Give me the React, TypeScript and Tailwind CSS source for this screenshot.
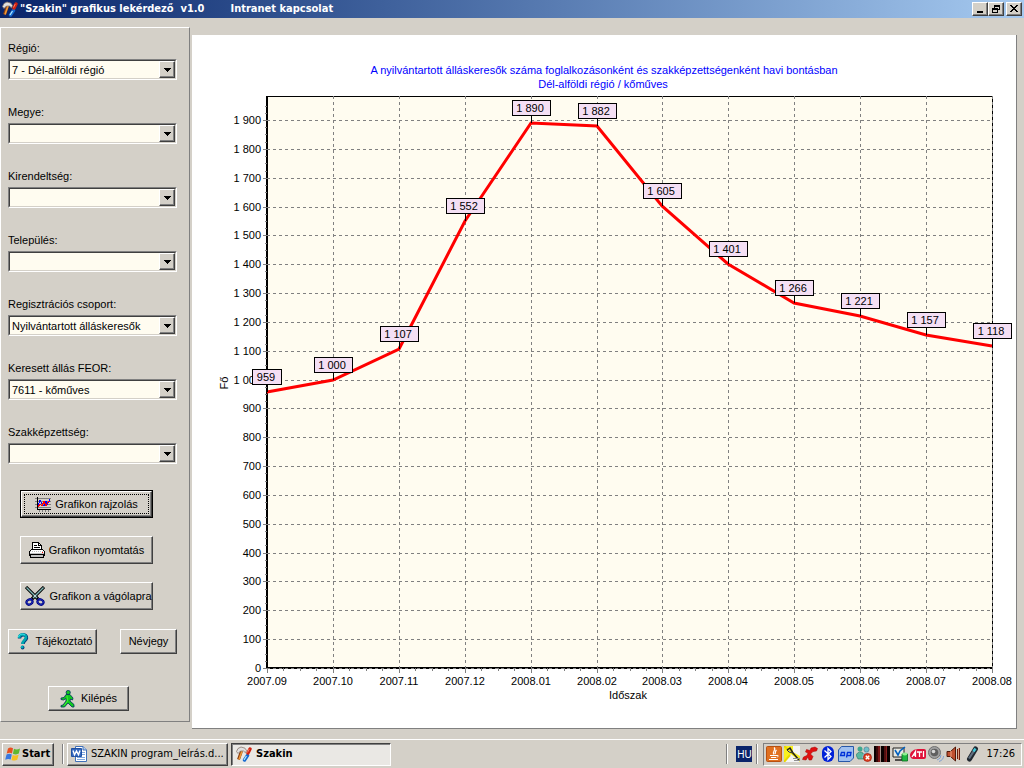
import React from "react";

const UI = "font-['Liberation_Sans',Arial,sans-serif]";
const TAHOMA = "font-['DejaVu_Sans_Condensed','DejaVu_Sans',sans-serif]";
const RAISED =
  "border border-t-white border-l-white border-r-[#404040] border-b-[#404040] shadow-[inset_-1px_-1px_0_#808080] bg-[#d4d0c8]";

const points = [
  { month: "2007.09", value: 959 },
  { month: "2007.10", value: 1000 },
  { month: "2007.11", value: 1107 },
  { month: "2007.12", value: 1552 },
  { month: "2008.01", value: 1890 },
  { month: "2008.02", value: 1882 },
  { month: "2008.03", value: 1605 },
  { month: "2008.04", value: 1401 },
  { month: "2008.05", value: 1266 },
  { month: "2008.06", value: 1221 },
  { month: "2008.07", value: 1157 },
  { month: "2008.08", value: 1118 },
];

const fields = [
  { id: "regio", label: "Régió:", value: "7 - Dél-alföldi régió" },
  { id: "megye", label: "Megye:", value: "" },
  { id: "kirendeltseg", label: "Kirendeltség:", value: "" },
  { id: "telepules", label: "Település:", value: "" },
  { id: "csoport", label: "Regisztrációs csoport:", value: "Nyilvántartott álláskeresők" },
  { id: "feor", label: "Keresett állás FEOR:", value: "7611 - kőműves" },
  { id: "szak", label: "Szakképzettség:", value: "" },
];

function format(n: number) {
  return n >= 1000 ? `${Math.floor(n / 1000)} ${String(n % 1000).padStart(3, "0")}` : String(n);
}

function ToolsIcon() {
  return (
    <svg width="16" height="16" viewBox="0 0 16 16" aria-hidden="true" className="shrink-0">
      <path d="M5.5 5 L2.5 13.5" stroke="#8a4010" strokeWidth="3" />
      <path d="M6 5 L3 13.5" stroke="#f09838" strokeWidth="1.6" />
      <path d="M0.5 5.5 L2 2.5 L5 1 L9 2.2 L10.5 4.5 L9.5 6.8 L7.5 5 L4.5 5 L2 7.5 Z" fill="#e0e0e0" stroke="#8a7870" strokeWidth="0.8" />
      <path d="M8.5 14 L11.5 9.5" stroke="#1468d0" strokeWidth="3.4" strokeLinecap="round" />
      <path d="M8 14 L10.5 10" stroke="#b0e8ff" strokeWidth="1.3" />
      <path d="M12 7 L14 3" stroke="#d02010" strokeWidth="3.4" strokeLinecap="round" />
      <path d="M11.5 6.5 L13.2 3" stroke="#ff8060" strokeWidth="1" />
    </svg>
  );
}

function ChartIcon() {
  return (
    <svg width="16" height="15" viewBox="0 0 16 15" aria-hidden="true" className="shrink-0" shapeRendering="crispEdges">
      <path d="M0 1.5H16 M0 4.5H16 M0 7.5H16 M0 10.5H16 M4.5 12V15 M7.5 12V15 M10.5 12V15 M13.5 12V15" stroke="#808080" fill="none" />
      <path d="M2.5 0V12.5H16" stroke="#000" fill="none" />
      <path d="M3 9 L5 3 L7 7 L9 9 L11 4 L12 8 L15 2" stroke="#0000ff" strokeWidth="1.2" fill="none" />
      <path d="M3 10 L5 7 L7 9 L9 4 L11 9 L13 5 L15 4" stroke="#ff0000" strokeWidth="1.2" fill="none" />
    </svg>
  );
}

function PrinterIcon() {
  return (
    <svg width="16" height="16" viewBox="0 0 16 16" aria-hidden="true" className="shrink-0" shapeRendering="crispEdges">
      <path d="M3.5 8.5V0.5H9.5L12.5 3.5V8.5Z" fill="#fff" stroke="#000" />
      <path d="M9.5 0.5V3.5H12.5 M5 3.5H8 M5 5.5H11" fill="none" stroke="#000" />
      <path d="M2.5 7.5H13.5L15.5 9.5V13.5H0.5V9.5Z" fill="#fff" stroke="#000" />
      <path d="M1 9.5H15" stroke="#c0c0c0" strokeDasharray="1 1" />
      <path d="M1 11.5H15" stroke="#c0c0c0" />
      <path d="M13 10H14V11H13Z" fill="#f00" />
      <path d="M1.5 12.5H14.5V15.5H1.5Z" fill="#c0c0c0" stroke="#000" />
    </svg>
  );
}

function ScissorsIcon() {
  return (
    <svg width="20" height="20" viewBox="0 0 20 20" aria-hidden="true" className="shrink-0">
      <path d="M1 1 L13 13 M19 1 L7 13" stroke="#000" strokeWidth="3.2" />
      <path d="M1.5 1.5 L12 12 M18.5 1.5 L8 12" stroke="#80b8b8" strokeWidth="1.4" />
      <circle cx="10" cy="10" r="0.8" fill="#fff" />
      <ellipse cx="4.5" cy="16" rx="3.1" ry="2.5" transform="rotate(-25 4.5 16)" fill="none" stroke="#000080" strokeWidth="2.2" />
      <ellipse cx="15.5" cy="16" rx="3.1" ry="2.5" transform="rotate(25 15.5 16)" fill="none" stroke="#000080" strokeWidth="2.2" />
      <ellipse cx="4.5" cy="16" rx="3" ry="2.4" transform="rotate(-25 4.5 16)" fill="none" stroke="#2848d8" strokeWidth="0.6" />
      <ellipse cx="15.5" cy="16" rx="3" ry="2.4" transform="rotate(25 15.5 16)" fill="none" stroke="#2848d8" strokeWidth="0.6" />
    </svg>
  );
}

function HelpIcon() {
  return (
    <svg width="12" height="17" viewBox="0 0 12 17" aria-hidden="true" className="shrink-0">
      <path d="M2.5 5.5 C2.5 0.8 10 0.8 9.5 5 C9.2 7.5 6 8 6 11" fill="none" stroke="#004080" strokeWidth="3.4" />
      <path d="M2 5 C2 0.5 9.4 0.5 9 4.5 C8.7 7 5.5 7.5 5.5 11" fill="none" stroke="#00a8b0" strokeWidth="2.6" />
      <path d="M1.5 4 C2.5 0.8 6 0.6 8 2" fill="none" stroke="#40e8f0" strokeWidth="1" />
      <circle cx="5.6" cy="14.5" r="1.9" fill="#004080" />
      <circle cx="5.2" cy="14.1" r="1.4" fill="#00b0b8" />
    </svg>
  );
}

function ExitIcon() {
  return (
    <svg width="15" height="18" viewBox="0 0 15 18" aria-hidden="true" className="shrink-0">
      <g stroke="#003060" strokeWidth="0.8">
        <path d="M6 4.5 L10 4.5 L13 8 L12.5 10 L10.5 9 L10 11 L14 14.5 L14 17 L12 17 L8 13 L4.5 17 L1 17 L1 15.5 L3 15 L6 11 L6 8.5 L3.5 10 L1 9.5 L1 8 L4 7.5 Z" fill="#10c820" />
        <circle cx="8.2" cy="2.5" r="2.1" fill="#10c820" />
      </g>
      <path d="M7 5.5 L7.5 11 L4 15.5" stroke="#40f030" strokeWidth="1" fill="none" />
    </svg>
  );
}

function WindowsIcon() {
  return (
    <svg width="16" height="16" viewBox="0 0 16 16" aria-hidden="true" className="shrink-0">
      <path d="M3 2.5 C5 1 6.5 1.5 8 2.3 L7 7.5 C5.5 6.6 4 6.5 1.7 7.6 Z" fill="#e85020" />
      <path d="M9 2.8 C11 3.8 13 3.5 15 2.4 L13.8 7.6 C12 8.7 10 8.6 7.9 7.7 Z" fill="#60b830" />
      <path d="M1.5 8.6 C3.5 7.6 5 7.6 6.8 8.5 L5.7 13.6 C4.2 12.7 2.4 12.7 0.2 13.7 Z" fill="#3878e0" />
      <path d="M7.7 8.9 C9.8 9.8 11.5 9.7 13.6 8.7 L12.3 13.8 C10.5 15 8.5 14.7 6.5 13.9 Z" fill="#f8c020" />
    </svg>
  );
}

function WordIcon() {
  return (
    <svg width="16" height="16" viewBox="0 0 16 16" aria-hidden="true" className="shrink-0">
      <path d="M4.5 0.5H12L15.5 4V15.5H4.5Z" fill="#fff" stroke="#4070b8" />
      <path d="M12 0.5V4H15.5" fill="#b8d0f0" stroke="#4070b8" />
      <path d="M11 6.5H14 M11 8.5H14 M6 11.5H14 M6 13.5H14" stroke="#80a8e0" />
      <path d="M0.5 2.5H10.5V10.5H0.5Z" fill="#3468c0" stroke="#2050a0" />
      <path d="M2 4.5L3.5 8.8L5.5 5L7.5 8.8L9 4.5" fill="none" stroke="#fff" strokeWidth="1.4" />
    </svg>
  );
}

function TrayIcon({ children }: { children: React.ReactNode }) {
  return (
    <svg width="16" height="16" viewBox="0 0 16 16" aria-hidden="true" className="shrink-0">
      {children}
    </svg>
  );
}

function TrayIcons() {
  return (
    <div className="flex items-center gap-[2px]">
      <TrayIcon>
        <rect x="0.5" y="0.5" width="15" height="15" rx="1" fill="#e07020" stroke="#b85010" />
        <path d="M8 1.5C11 4 5.5 5 8 8.5 M10.5 4C8.5 6 10 6 9 8" stroke="#fff" strokeWidth="1.2" fill="none" />
        <path d="M4 9.5H11 M5 11.5H10 M3 13.5H12 M11 9.5Q13.5 9 11 11.5" stroke="#fff" fill="none" />
      </TrayIcon>
      <TrayIcon>
        <rect width="16" height="16" fill="#f8f020" />
        <path d="M0 16L7 8L16 16Z M9 0H16V10L9 6Z" fill="#f4f4f4" />
        <path d="M0 0L10 9 M6 9L0 16" stroke="#e8d800" strokeWidth="2" />
        <path d="M3 4L6 2L9 7L15 14" fill="none" stroke="#202020" strokeWidth="1.5" />
        <path d="M3 4L5 6L9 7" fill="#e8f4ff" stroke="#303030" />
        <path d="M9 12.5H16 M10 14.5H16" stroke="#909090" />
      </TrayIcon>
      <TrayIcon>
        <path d="M9 2L13 1L15.5 2.5L14.5 5L11 5.5L8.5 8L11 10.5L9.5 14L7 14L6 11L4 14L0.5 13.5L1.5 11L5 9.5L6 7L3.5 6L4.5 3.5L8 4.5Z" fill="#e01010" stroke="#a00000" strokeWidth="0.5" />
      </TrayIcon>
      <TrayIcon>
        <rect x="2" y="0" width="12" height="16" rx="6" fill="#0020d8" />
        <path d="M4.5 4.5L11 10.5L8 13.5V2.5L11 5.5L4.5 11.5" fill="none" stroke="#fff" strokeWidth="1.3" />
      </TrayIcon>
      <TrayIcon>
        <path d="M3.5 0.5H15.5V12L12 15.5H0.5V4Z" fill="#a0c0f0" stroke="#2858a8" />
        <path d="M3.5 6.5H6.5V9.5H2.5Z" fill="none" stroke="#0030d8" strokeWidth="1.3" />
        <path d="M8.5 11.5L9.5 6.5H13L12.5 9.5H9" fill="none" stroke="#0030d8" strokeWidth="1.3" />
      </TrayIcon>
      <TrayIcon>
        <circle cx="4" cy="3" r="2.5" fill="#40a890" />
        <path d="M0 9Q3 4 7 7L9 13H2Z" fill="#58b8a0" stroke="#287060" strokeWidth="0.6" />
        <circle cx="10.5" cy="3.5" r="2.6" fill="#70c0c8" stroke="#386080" strokeWidth="0.5" />
        <path d="M6 12Q7 6 11 6.5Q15 7 15 12Z" fill="#88b8d0" />
        <circle cx="11.5" cy="11.5" r="4" fill="#e04020" stroke="#a01808" strokeWidth="0.7" />
        <path d="M9.8 9.8L13.2 13.2M13.2 9.8L9.8 13.2" stroke="#fff" strokeWidth="1.4" />
      </TrayIcon>
      <TrayIcon>
        <rect width="16" height="16" fill="#080000" />
        <path d="M2 0H4V16H2Z" fill="#380808" />
        <path d="M4 0H6V16H4Z" fill="#781414" />
        <path d="M6 0H7V16H6Z" fill="#a89088" />
        <path d="M10 0H12V16H10Z" fill="#501010" />
        <path d="M12 0H13V16H12Z" fill="#882020" />
      </TrayIcon>
      <TrayIcon>
        <path d="M1 2H12V11H1Z" fill="#e8e8e0" stroke="#202020" />
        <path d="M3 4L6 9L8 5L13 1" stroke="#0060c0" strokeWidth="1.6" fill="none" />
        <path d="M3 14H10L11 10" stroke="#202020" fill="none" strokeWidth="1.5" />
        <path d="M10 8H15.5V15H10Z" fill="#20b840" stroke="#087020" strokeWidth="0.8" />
        <ellipse cx="12.8" cy="8" rx="2.6" ry="1.4" fill="#90f090" />
      </TrayIcon>
      <TrayIcon>
        <path d="M0 9C0 6 4 3 8 3H14Q16 3 16 5V11Q16 13 14 13H3Q0 12 0 9Z" fill="#e01038" />
        <path d="M2 11L5.5 5.5V11M3.5 9H5.5M7 6H12M9.5 6V11M13.5 5V11" stroke="#fff" fill="none" strokeWidth="1.3" />
      </TrayIcon>
      <TrayIcon>
        <circle cx="6.5" cy="6.5" r="6" fill="#a0a0a0" stroke="#707070" />
        <circle cx="6.5" cy="6.5" r="3.8" fill="#606060" />
        <circle cx="5.5" cy="5.5" r="1.8" fill="#d8d8d8" />
        <path d="M9 14Q13 13 13 9 M11 15.5Q15.5 14 15.5 10" stroke="#80a0d0" fill="none" />
      </TrayIcon>
      <TrayIcon>
        <path d="M1 5.5H4.5L9.5 1V15L4.5 10.5H1Z" fill="#c05030" stroke="#501808" />
        <path d="M5 5V11" stroke="#f0a080" />
        <path d="M11.5 3V13 M13.5 2V14" stroke="#702010" />
        <path d="M12.5 2V14" stroke="#e0a080" />
      </TrayIcon>
      <TrayIcon>
        <path d="M5.5 13L11.5 3" stroke="#202830" strokeWidth="5" strokeLinecap="round" />
        <path d="M5 12.5L10.5 4" stroke="#607080" strokeWidth="2.2" />
        <path d="M9.5 5.5L11.5 2.5" stroke="#40c8d8" strokeWidth="2.4" />
      </TrayIcon>
    </div>
  );
}

function Field({ id, label, value }: { id: string; label: string; value: string }) {
  return (
    <div className="flex flex-col">
      <label htmlFor={id} className="h-[19px] text-[11px] leading-4">
        {label}
      </label>
      <div className="relative h-[21px] border border-t-[#808080] border-l-[#808080] border-r-white border-b-white">
        <select
          id={id}
          defaultValue={value}
          className="block h-full w-full appearance-none border border-t-[#404040] border-l-[#404040] border-r-[#d4d0c8] border-b-[#d4d0c8] bg-[#fffcf0] pr-5 pl-[2px] text-[11px] leading-4 text-black outline-none"
        >
          <option value={value}>{value}</option>
        </select>
        <span className={`pointer-events-none absolute top-px right-px bottom-px flex w-4 items-center justify-center ${RAISED}`}>
          <svg width="7" height="4" viewBox="0 0 7 4" aria-hidden="true" shapeRendering="crispEdges">
            <path d="M0 0H7L3.5 4Z" fill="#000" />
          </svg>
        </span>
      </div>
    </div>
  );
}

function PushButton({ className, children }: { className: string; children: React.ReactNode }) {
  return (
    <button type="button" className={`flex items-center justify-center text-[11px] whitespace-nowrap text-black ${RAISED} ${className}`}>
      {children}
    </button>
  );
}

function Chart() {
  const left = 75;
  const right = 800;
  const top = 61;
  const bottom = 633;
  const step = (right - left) / (points.length - 1);
  const x = (i: number) => Math.round(left + i * step);
  const y = (v: number) => Math.round(bottom - v * 0.2884);
  const pointY = (v: number) => Math.round(bottom + 0.5 - v * 0.2884);
  const hundreds = Array.from({ length: 20 }, (_, i) => i * 100);
  const yMinor = Array.from({ length: 79 }, (_, i) => i * 25).filter((v) => v % 100 !== 0);
  const xMinor = Array.from({ length: 44 }, (_, i) => i).filter((i) => i % 4 !== 0);

  return (
    <svg viewBox="0 0 824 693" className="h-auto w-full" role="img" aria-label="Dél-alföldi régió / kőműves" fontSize="11">
      <g fill="#0000ff" textAnchor="middle">
        <text x="412" y="39">A nyilvántartott álláskeresők száma foglalkozásonként és szakképzettségenként havi bontásban</text>
        <text x="411" y="53">Dél-alföldi régió / kőműves</text>
      </g>
      <g shapeRendering="crispEdges">
        <rect x={left} y={top} width={right - left} height={bottom - top} fill="#fffcf0" />
        <path d={`M${left} ${top + 0.5}H${right + 1}M${right + 0.5} ${top}V${bottom}`} stroke="#000" fill="none" />
        <path d={`M${left} ${top}V${bottom + 1}M${left - 1} ${bottom}H${right + 1}`} stroke="#000" strokeWidth="2" fill="none" />
        <g stroke="#808080">
          {hundreds.map((v) => (
            <g key={v}>
              <line x1={left} x2={right} y1={y(v) + 0.5} y2={y(v) + 0.5} strokeDasharray="3 3" />
              <line x1={left - 4} x2={left} y1={y(v) + 0.5} y2={y(v) + 0.5} />
            </g>
          ))}
          {points.map((p, i) => (
            <g key={p.month}>
              {i > 0 && <line x1={x(i) + 0.5} x2={x(i) + 0.5} y1={top} y2={bottom} strokeDasharray="3 3" />}
              <line x1={x(i) + 0.5} x2={x(i) + 0.5} y1={bottom} y2={bottom + 5} />
            </g>
          ))}
          {yMinor.map((v) => (
            <line key={v} x1={left - 2} x2={left} y1={y(v) + 0.5} y2={y(v) + 0.5} />
          ))}
          {xMinor.map((i) => (
            <line key={i} x1={x(i / 4) + 0.5} x2={x(i / 4) + 0.5} y1={bottom} y2={bottom + 3} />
          ))}
        </g>
      </g>
      <g textAnchor="end">
        {hundreds.map((v) => (
          <text key={v} x="69" y={y(v) + 4}>{format(v)}</text>
        ))}
      </g>
      <g textAnchor="middle">
        {points.map((p, i) => (
          <text key={p.month} x={x(i)} y="650">{p.month}</text>
        ))}
        <text x="436" y="664">Időszak</text>
        <text transform="translate(36 348) rotate(-90)">Fő</text>
      </g>
      <polyline points={points.map((p, i) => `${x(i)},${pointY(p.value)}`).join(" ")} fill="none" stroke="#ff0000" strokeWidth="3" />
      {points.map((p, i) => {
        const w = p.value >= 1000 ? 38 : 29;
        const boxLeft = x(i) - Math.ceil(w / 2) + 0.5;
        const boxTop = pointY(p.value) - 23 + 0.5;
        return (
          <g key={p.month}>
            <path d={`M${x(i) + 0.5} ${boxTop + 15}V${pointY(p.value)}`} stroke="#000" />
            <rect x={boxLeft} y={boxTop} width={w} height="15" fill="#f4dff4" stroke="#000" />
            <text x={x(i) - 1} y={boxTop + 11} textAnchor="middle">{format(p.value)}</text>
          </g>
        );
      })}
    </svg>
  );
}

function CaptionButton({ label, children, className = "" }: { label: string; children: React.ReactNode; className?: string }) {
  return (
    <button type="button" aria-label={label} className={`flex h-[14px] w-4 items-center justify-center ${RAISED} ${className}`}>
      <svg width="10" height="10" viewBox="0 0 10 10" aria-hidden="true" shapeRendering="crispEdges" className="shrink-0">
        {children}
      </svg>
    </button>
  );
}

function Divider() {
  return <span className="h-5 w-[2px] border-r border-l border-r-white border-l-[#808080]" />;
}

export default function App() {
  return (
    <div className={`flex min-h-screen flex-col bg-[#d4d0c8] text-black ${UI}`}>
      <header className="flex h-[18px] items-center bg-linear-to-r from-[#0a246a] to-[#a6caf0] pr-[2px] pl-[2px]">
        <ToolsIcon />
        <h1 className={`ml-[2px] flex flex-1 gap-[26px] text-[11px] font-bold whitespace-pre text-white ${TAHOMA}`}>
          <span>"Szakin" grafikus lekérdező  v1.0</span>
          <span>Intranet kapcsolat</span>
        </h1>
        <CaptionButton label="Kis méret">
          <path d="M2 7H8V9H2Z" />
        </CaptionButton>
        <CaptionButton label="Előző méret">
          <path d="M3 1H9V6H7V5H8V3H4V4H3Z M1 4H7V9H1Z M2 6V8H6V6Z" fillRule="evenodd" />
        </CaptionButton>
        <CaptionButton label="Bezárás" className="ml-[2px]">
          <path d="M1 1H3V2H4V3H6V2H7V1H9V2H8V3H7V4H6V5H7V6H8V7H9V8H7V7H6V6H4V7H3V8H1V7H2V6H3V5H4V4H3V3H2V2H1Z" />
        </CaptionButton>
      </header>

      <main className="flex flex-1 items-start gap-[2px] pt-[9px] pr-[7px] pb-[10px]">
        <form className="flex w-[190px] shrink-0 flex-col border border-t-white border-l-white border-r-[#808080] border-b-[#808080] px-[7px] pt-3 pb-[10px]">
          <div className="flex w-[169px] flex-col gap-6">
            {fields.map((f) => (
              <Field key={f.id} {...f} />
            ))}
          </div>
          <div className="mt-[26px] ml-3 flex w-[133px] flex-col gap-[18px]">
            <div className="flex border border-black">
              <PushButton className="h-[26px] w-full p-[2px]">
                <span className="flex h-full w-full items-center justify-center gap-1 border border-dotted border-black">
                  <ChartIcon />
                  Grafikon rajzolás
                </span>
              </PushButton>
            </div>
            <PushButton className="h-7 gap-1">
              <PrinterIcon />
              Grafikon nyomtatás
            </PushButton>
            <PushButton className="h-7 gap-1 pl-1">
              <ScissorsIcon />
              Grafikon a vágólapra
            </PushButton>
          </div>
          <div className="mt-[19px] flex w-[169px] justify-between">
            <PushButton className="h-[25px] w-[89px] gap-[7px] pl-1">
              <HelpIcon />
              Tájékoztató
            </PushButton>
            <PushButton className="h-[25px] w-[57px]">Névjegy</PushButton>
          </div>
          <PushButton className="mt-8 ml-10 h-[25px] w-[81px] gap-[6px]">
            <ExitIcon />
            Kilépés
          </PushButton>
        </form>

        <section className="mt-2 min-w-0 flex-1 border-r border-b border-[#808080] bg-white">
          <Chart />
        </section>
      </main>

      <footer className={`flex h-[29px] items-center border-t border-white px-[2px] text-[11px] ${TAHOMA}`}>
        <button type="button" className={`flex h-[23px] w-[52px] items-center gap-px pl-[2px] font-bold ${RAISED}`}>
          <WindowsIcon />
          Start
        </button>
        <div className="ml-2 flex flex-1 items-center gap-[3px]">
          <Divider />
          <button type="button" className={`flex h-[23px] w-[161px] items-center gap-1 pl-[3px] ${RAISED}`}>
            <WordIcon />
            <span className="truncate">SZAKIN program_leírás.d...</span>
          </button>
          <button
            type="button"
            className="flex h-[23px] w-40 items-center gap-1 border border-t-[#404040] border-l-[#404040] border-r-white border-b-white bg-[#eae8e4] pl-1 font-bold shadow-[inset_1px_1px_0_#808080]"
          >
            <ToolsIcon />
            Szakin
          </button>
        </div>
        <div className="flex items-center gap-2">
          <Divider />
          <span className={`flex h-4 w-4 items-center justify-center bg-[#0a246a] text-[10px] text-white ${UI}`}>HU</span>
        </div>
        <div className="ml-1 flex items-center gap-[5px]">
          <Divider />
          <div className="flex h-[23px] items-center gap-[6px] border border-t-[#808080] border-l-[#808080] border-r-white border-b-white pr-[6px] pl-[2px]">
            <TrayIcons />
            <time>17:26</time>
          </div>
        </div>
      </footer>
    </div>
  );
}
